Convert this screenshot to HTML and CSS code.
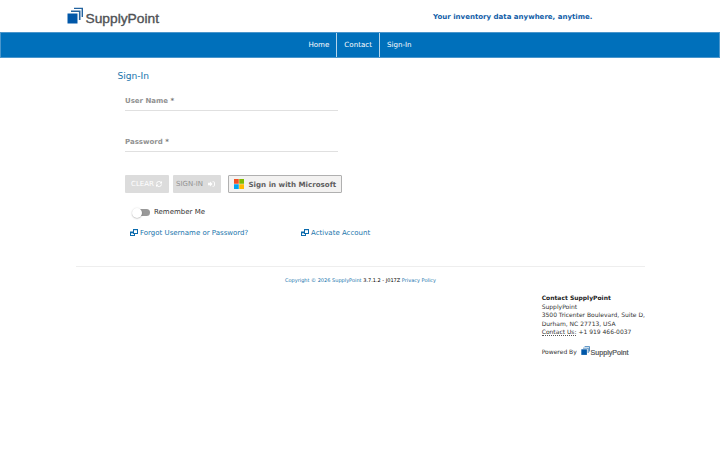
FILE: index.html
```
<!DOCTYPE html>
<html lang="en">
<head>
  <meta charset="UTF-8" />
  <meta name="viewport" content="width=device-width, initial-scale=1.0"/>
  <title>SupplyPoint - Sign-In</title>
  <link rel="stylesheet" href="styles.css">
</head>
<body>
  <header class="header">
    <svg class="logo" viewBox="0 0 98 24">
      <path fill="#0057a8" d="M0.500 6.500h10v10H0.500z"/>
      <path fill="#23639f" d="M4 3.500h9.500v9.500h-1.600V5.100H4z"/>
      <path fill="#23639f" d="M7 0.700h9v9.300h-1.400V2.100H7z"/>
      <text class="logo-text" x="18.500" y="15.500" textLength="73.500" lengthAdjust="spacingAndGlyphs">SupplyPoint</text>
    </svg>
    <div class="tagline">Your inventory data anywhere, anytime.</div>
  </header>

  <nav class="nav">
    <a href="#">Home</a>
    <a href="#">Contact</a>
    <a href="#">Sign-In</a>
  </nav>

  <main class="main">
    <h1>Sign-In</h1>
    <form class="form">
      <label class="field">User Name <span>*</span></label>
      <label class="field">Password <span>*</span></label>
      <div class="buttons">
        <button type="button" class="btn btn-clear" disabled>
          <span class="label-clear">CLEAR</span>
          <svg class="icon-refresh" viewBox="0 0 12 12">
            <path d="M1 5a5 5 0 0 1 9-2M11 7a5 5 0 0 1-9 2" fill="none" stroke="#fff" stroke-width="2"/>
            <path d="M12 0v5H7zM0 12V7h5z" fill="#fff"/>
          </svg>
        </button>
        <button type="button" class="btn btn-signin" disabled>
          <span class="label-signin">SIGN-IN</span>
          <svg class="icon-signin" viewBox="0 0 14 12">
            <path d="M0 3.500h4V.8L9.200 6 4 11.200V8.500H0z" fill="#fff"/>
            <path d="M9 1.500h2q2 0 2 1.500v6q0 1.500-2 1.500H9" fill="none" stroke="#fff" stroke-width="1.800"/>
          </svg>
        </button>
        <button type="button" class="btn-ms">
          <svg class="icon-ms" viewBox="0 0 21 21">
            <path fill="#f25022" d="M0 0h10v10H0z"/>
            <path fill="#7fba00" d="M11 0h10v10H11z"/>
            <path fill="#00a4ef" d="M0 11h10v10H0z"/>
            <path fill="#ffb900" d="M11 11h10v10H11z"/>
          </svg>
          <span class="label-ms">Sign in with Microsoft</span>
        </button>
      </div>
      <div class="remember">
        <span class="switch"></span>
        <span class="label-remember">Remember Me</span>
      </div>
      <div class="links">
        <a class="link-forgot" href="#">
          <svg class="icon-clone" viewBox="0 0 8 7"><path d="M0 2.500h5V7H0z" fill="#0a6aad"/><path d="M1 4.300h3V6H1z" fill="#fff"/><path d="M3 0h5v5H3z" fill="#0a6aad"/><path d="M4 1.200h3V4H4z" fill="#fff"/></svg>
          <span>Forgot Username or Password?</span>
        </a>
        <a class="link-activate" href="#">
          <svg class="icon-clone" viewBox="0 0 8 7"><path d="M0 2.500h5V7H0z" fill="#0a6aad"/><path d="M1 4.300h3V6H1z" fill="#fff"/><path d="M3 0h5v5H3z" fill="#0a6aad"/><path d="M4 1.200h3V4H4z" fill="#fff"/></svg>
          <span>Activate Account</span>
        </a>
      </div>
    </form>
  </main>

  <footer class="footer">
    <div class="copyright"><a href="#">Copyright © 2026 SupplyPoint</a> <b>3.7.1.2 - J017Z</b> <a href="#">Privacy Policy</a></div>
    <address class="contact">
      <strong>Contact SupplyPoint</strong><br>
      SupplyPoint<br>
      3500 Tricenter Boulevard, Suite D,<br>
      Durham, NC 27713, USA<br>
      <abbr>Contact Us:</abbr> +1 919 466-0037
      <div class="powered">
        <span>Powered By</span>
        <svg class="logo-small" viewBox="0 0 52 12">
          <path fill="#0057a8" d="M0.300 3.300h5.600v5.600H0.300z"/>
          <path fill="#3378b5" d="M2 1.700h5.600v5.400h-.9V2.600H2z"/>
          <path fill="#3378b5" d="M3.600 0.200h5.200v5.200h-.9V1.100H3.600z"/>
          <text class="logo-small-text" x="9.500" y="8.500" textLength="38" lengthAdjust="spacingAndGlyphs">SupplyPoint</text>
        </svg>
      </div>
    </address>
  </footer>
</body>
</html>
```

FILE: styles.css
```
:root {
  --primary: #0070bb;
  --link: #1874ac;
  --text: #333;
  --muted: #929292;
  --line: #e0e0e0;
}

* {
  box-sizing: border-box;
}

body {
  margin: 0;
  font-family: "DejaVu Sans", sans-serif;
  font-size: 7px;
  color: var(--text);
  background: #fff;
}

a {
  color: var(--link);
  text-decoration: none;
}

svg {
  display: block;
  flex: none;
  overflow: visible;
}

.header {
  display: flex;
  justify-content: space-between;
  height: 32px;
  padding: 7px 127.5px 0 67px;
}

.logo {
  width: 98px;
  height: 24px;
}

.logo-text {
  font: 12.8px "Liberation Sans", sans-serif;
  fill: #505255;
  stroke: #505255;
  stroke-width: 0.35px;
}

.tagline {
  padding-top: 5px;
  font-size: 7.02px;
  font-weight: bold;
  line-height: 10px;
  color: #1260a8;
}

.nav {
  display: flex;
  justify-content: center;
  height: 26px;
  background: var(--primary);
  border: 1px solid #4a96cc;
}

.nav a {
  padding: 0 7px;
  font-size: 7.1px;
  line-height: 24px;
  color: #fff;
}

.nav a + a {
  border-left: 1px solid #b5d5eb;
}

.main {
  padding: 12px 76px 0 117.5px;
  height: 208px;
}

h1 {
  margin: 0;
  font-size: 9.1px;
  font-weight: normal;
  line-height: 13px;
  color: var(--link);
}

.form {
  padding: 7px 0 0 7.5px;
}

.field {
  display: block;
  width: 213px;
  height: 21px;
  margin-bottom: 20px;
  padding-top: 6px;
  border-bottom: 1px solid var(--line);
  font-weight: bold;
  line-height: 10px;
  color: var(--muted);
}

.field span {
  color: #777;
}

.buttons {
  display: flex;
  padding-top: 3px;
}

.btn {
  display: flex;
  align-items: center;
  height: 18px;
  border: none;
  border-radius: 1px;
  background: #dcdcdc;
  font-family: inherit;
  font-size: 7px;
}

.btn-clear {
  width: 44px;
  padding: 0 0 0 6px;
  gap: 2px;
  color: #fff;
}

.btn-signin {
  width: 48px;
  margin-left: 4px;
  padding: 0 0 0 3px;
  gap: 5px;
  color: #929292;
}

.btn-ms {
  display: flex;
  align-items: center;
  width: 114px;
  height: 18px;
  margin-left: 7px;
  padding: 0 0 0 4.5px;
  gap: 5px;
  border: 1px solid #b0b0b0;
  border-radius: 1px;
  background: #f3f2f1;
  font-family: inherit;
  font-size: 7.1px;
  font-weight: bold;
  color: #5e5e5e;
}

.icon-refresh {
  width: 6px;
  height: 6px;
}

.icon-signin {
  width: 7px;
  height: 6px;
}

.icon-ms {
  width: 10px;
  height: 10px;
}

.remember {
  display: flex;
  align-items: center;
  height: 12px;
  margin-top: 13px;
  padding-left: 8px;
  gap: 4px;
}

.switch {
  position: relative;
  width: 17px;
  height: 7px;
  border-radius: 4px;
  background: #999;
}

.switch::before {
  content: "";
  position: absolute;
  left: -1px;
  top: -1px;
  width: 10px;
  height: 10px;
  border-radius: 50%;
  background: #fff;
  box-shadow: 0 0.5px 1.5px rgba(0, 0, 0, 0.35);
}

.links {
  display: flex;
  margin-top: 8px;
  padding-left: 5px;
}

.links a {
  display: flex;
  align-items: center;
  height: 13px;
  gap: 2px;
}

.link-forgot {
  width: 171px;
}

.icon-clone {
  width: 8px;
  height: 7px;
}

.footer {
  margin: 0 75px 0 76px;
  border-top: 1px solid #eee;
}

.copyright {
  padding-top: 10px;
  text-align: center;
  font-size: 5.02px;
  line-height: 7px;
}

.copyright b {
  font-weight: normal;
  color: #000;
}

.contact {
  width: 112px;
  margin: 10px 0 0 465.7px;
  font-size: 6px;
  font-style: normal;
  line-height: 8.6px;
  white-space: nowrap;
}

.contact strong {
  color: #222;
}

.contact abbr {
  border-bottom: 1px dotted #555;
}

.powered {
  display: flex;
  align-items: center;
  gap: 4px;
  margin-top: 9px;
}

.logo-small {
  width: 52px;
  height: 12px;
}

.logo-small-text {
  font: 6.8px "Liberation Sans", sans-serif;
  fill: #505255;
  stroke: #505255;
  stroke-width: 0.2px;
}
```
